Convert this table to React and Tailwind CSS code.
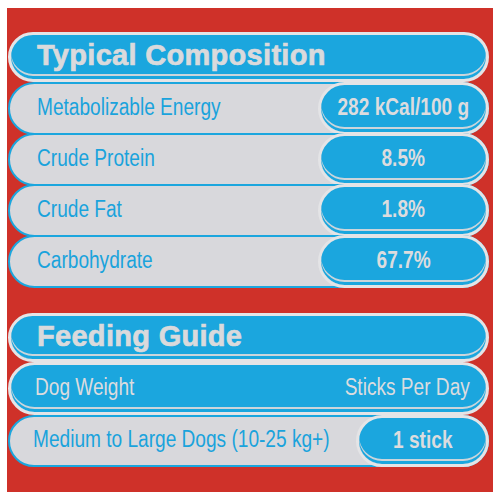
import React from 'react';

const BLUE = 'bg-[#1ba6de]';

const composition = [
  { label: 'Metabolizable Energy', value: '282 kCal/100 g' },
  { label: 'Crude Protein', value: '8.5%' },
  { label: 'Crude Fat', value: '1.8%' },
  { label: 'Carbohydrate', value: '67.7%' },
];

// condensed look: the packaging uses a condensed grotesque
const Narrow = ({ children, className = '', origin = 'origin-left' }) => (
  <span className={`inline-block scale-x-[0.83] whitespace-nowrap leading-none ${origin} ${className}`}>
    {children}
  </span>
);

const Heading = ({ children, h }) => (
  <div
    className={`${BLUE} ${h} flex items-center rounded-full border-[3px] border-[#e4e4e6] pb-[3px] pl-[26px] shadow-[inset_0_-3px_0_#1ba6de,inset_0_-5px_0_#cbd5db]`}
  >
    <span className="text-[29px] font-bold leading-none tracking-[0.3px] text-[#dadadc] [-webkit-text-stroke:0.7px_#dadadc]">
      {children}
    </span>
  </div>
);

const ValuePill = ({ children, w }) => (
  <div
    className={`${BLUE} ${w} -my-[2px] -mr-[2px] flex shrink-0 items-center justify-center self-stretch rounded-full border-[3px] border-[#e4e4e6] pb-[2px] shadow-[inset_0_-3px_0_#1ba6de,inset_0_-5px_0_#cbd5db]`}
  >
    <Narrow origin="origin-center" className="text-[23px] font-bold text-[#dcdcde]">
      {children}
    </Narrow>
  </div>
);

const LightRow = ({ label, children, h, pl, extra = '' }) => (
  <div
    className={`flex ${h} items-center rounded-full border-2 border-[#1ba6de] bg-[#d8d8dc] ${pl} ${extra}`}
  >
    <div className="min-w-0 flex-1">
      <Narrow className="pb-[2px] text-[23px] text-[#1aa3dc]">{label}</Narrow>
    </div>
    {children}
  </div>
);

const App = () => {
  return (
    <div
      className="h-[500px] w-[500px] bg-white pl-[7px] pt-[8px]"
      style={{ fontFamily: '"Liberation Sans", Arial, sans-serif' }}
    >
      <div className="flex h-[484px] w-[486px] flex-col bg-[#cf3129] pl-[1px] pr-[4px] pt-[24px]">
        {/* Typical Composition */}
        <Heading h="h-[50px]">Typical Composition</Heading>
        <div className="flex flex-col">
          {composition.map((row, i) => (
            <LightRow
              key={row.label}
              label={row.label}
              h="h-[53px]"
              pl="pl-[27px]"
              extra={i > 0 ? '-mt-[2px]' : ''}
            >
              <ValuePill w="w-[171px]">{row.value}</ValuePill>
            </LightRow>
          ))}
        </div>

        {/* Feeding Guide */}
        <div className="mt-[25px]">
          <Heading h="h-[49px]">Feeding Guide</Heading>
        </div>
        <div
          className={`${BLUE} flex h-[53px] items-center justify-between rounded-full border-[3px] border-[#e4e4e6] pb-[2px] pl-[24px] pr-[16px] shadow-[inset_0_-3px_0_#1ba6de,inset_0_-5px_0_#cbd5db]`}
        >
          <Narrow className="text-[23px] text-[#dcdcde]">Dog Weight</Narrow>
          <Narrow origin="origin-right" className="text-[23px] text-[#dcdcde]">
            Sticks Per Day
          </Narrow>
        </div>
        <LightRow label="Medium to Large Dogs (10-25 kg+)" h="h-[52px]" pl="pl-[23px]">
          <ValuePill w="w-[133px]">1 stick</ValuePill>
        </LightRow>
      </div>
    </div>
  );
};

export default App;
